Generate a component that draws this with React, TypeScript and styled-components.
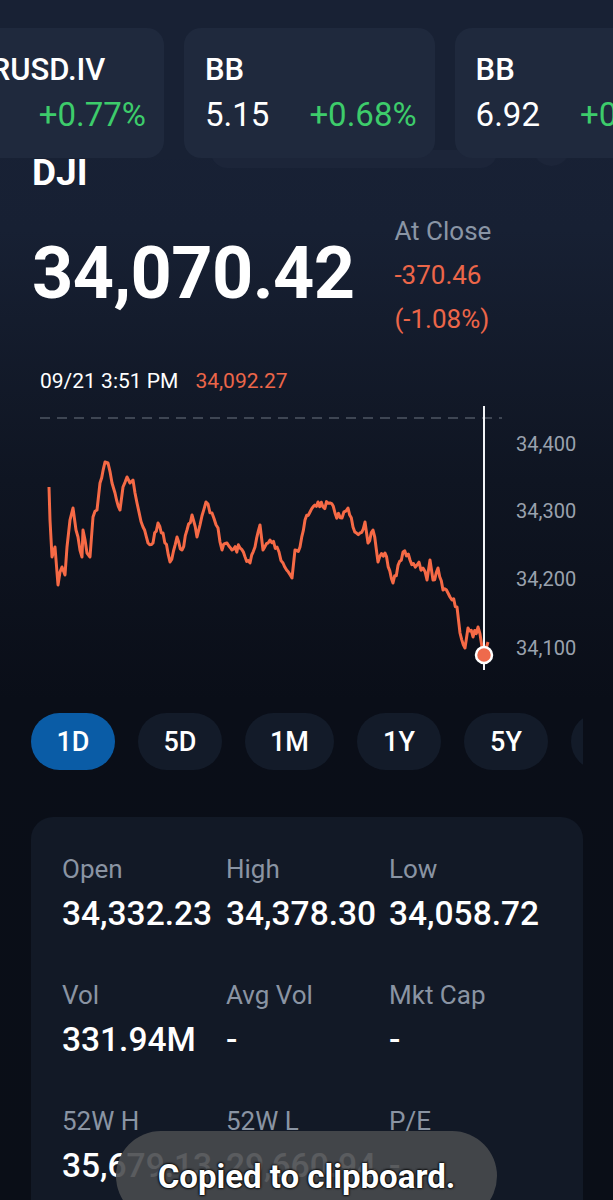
import React from 'react'
import styled, { createGlobalStyle } from 'styled-components'

const GlobalStyle = createGlobalStyle`
  html, body {
    margin: 0;
    padding: 0;
    background: #0a0e17;
  }
  body {
    font-family: Roboto, 'Noto Sans', 'Liberation Sans', sans-serif;
    -webkit-font-smoothing: antialiased;
  }
`

const Page = styled.div`
  position: relative;
  width: 613px;
  height: 1200px;
  overflow: hidden;
  background: linear-gradient(
    180deg,
    #192237 0px,
    #172033 230px,
    #0f1522 480px,
    #0a0e18 700px,
    #0a0e17 1200px
  );
  color: #fff;
`

/* sticky ticker strip, drawn over the scrolled title */
const TickerStrip = styled.div`
  position: absolute;
  top: 0;
  left: 0;
  right: 0;
  height: 159px;
  background: #182134;
  z-index: 2;
`
const HiddenSearch = styled.div`
  position: absolute;
  top: 150px;
  left: 211px;
  width: 286px;
  height: 18px;
  border-radius: 0 0 16px 16px;
  background: #1c2539;
`
const HiddenButton = styled.div`
  position: absolute;
  top: 146px;
  left: 533px;
  width: 37px;
  height: 20px;
  border-radius: 0 0 20px 20px;
  background: #1c2539;
`
const TickerTrack = styled.div`
  position: relative;
  display: flex;
  gap: 20px;
  padding-top: 28px;
  margin-left: -68px;
`
const TickerCard = styled.div`
  flex: none;
  display: flex;
  flex-direction: column;
  height: 130px;
  box-sizing: border-box;
  padding: 24px 18px 0 21px;
  border-radius: 17px;
  background: #1f293d;
`
const TickerName = styled.div`
  font-size: 31px;
  line-height: 36px;
  font-weight: 500;
  white-space: nowrap;
`
const TickerRow = styled.div`
  display: flex;
  gap: 40px;
  margin-top: 7px;
  font-size: 33px;
  line-height: 40px;
  white-space: nowrap;
`
const Up = styled.span`
  color: #3dcc6b;
`

const Content = styled.div`
  padding: 153px 0 0;
`
const Symbol = styled.div`
  margin-left: 32px;
  font-size: 37px;
  line-height: 40px;
  font-weight: 700;
`
const PriceRow = styled.div`
  display: flex;
  align-items: flex-start;
  gap: 40px;
  margin: 16px 0 0 32px;
`
const BigPrice = styled.div`
  margin-top: 25px;
  font-size: 72px;
  line-height: 80px;
  font-weight: 700;
  letter-spacing: -0.6px;
`
const ChangeCol = styled.div`
  display: flex;
  flex-direction: column;
  font-size: 26px;
  line-height: 44px;
`
const Muted = styled.span`
  color: #8a95a5;
`
const Down = styled.span`
  color: #ec6649;
`

const CrossHair = styled.div`
  display: flex;
  gap: 17px;
  margin: 26px 0 0 40px;
  font-size: 21px;
  line-height: 28px;
`

const ChartBox = styled.div`
  margin-top: 5px;
  height: 300px;
`
const AxisLabel = styled.text`
  font-family: Roboto, 'Liberation Sans', sans-serif;
  font-size: 20px;
  fill: #9aa2ae;
`

const Tabs = styled.div`
  display: flex;
  gap: 23px;
  margin: 13px 30px 0 31px;
  overflow: hidden;
`
const Tab = styled.div<{ $active?: boolean }>`
  flex: none;
  display: flex;
  align-items: center;
  justify-content: center;
  min-width: 84px;
  height: 57px;
  box-sizing: border-box;
  padding: 0 25px;
  border-radius: 29px;
  background: ${(p) => (p.$active ? '#0a5ca6' : '#131b29')};
  font-size: 27px;
  font-weight: 500;
`

const StatsCard = styled.div`
  margin: 47px 30px 0 31px;
  padding: 35px 0 60px 31px;
  border-radius: 22px;
  background: #121926;
  display: grid;
  grid-template-columns: 164px 163px 1fr;
  row-gap: 44px;
`
const Stat = styled.div`
  display: flex;
  flex-direction: column;
  gap: 8px;
`
const StatLabel = styled.div`
  font-size: 26px;
  line-height: 34px;
  color: #8a94a3;
`
const StatValue = styled.div`
  font-size: 33.5px;
  line-height: 40px;
  font-weight: 500;
  white-space: nowrap;
`

const Toast = styled.div`
  position: absolute;
  left: 116px;
  top: 1131px;
  width: 381px;
  height: 90px;
  border-radius: 45px;
  background: rgba(72, 74, 78, 0.9);
  display: flex;
  align-items: center;
  justify-content: center;
  z-index: 3;
  font-size: 33px;
  font-weight: 700;
  color: #fff;
  text-shadow: 0 0 2px #000, 0 0 2px #000, 0 0 3px #000;
`

const tickers = [
  { name: 'EURUSD.IV', price: '0.9', change: '+0.77%' },
  { name: 'BB', price: '5.15', change: '+0.68%' },
  { name: 'BB', price: '6.92', change: '+0.68%' },
]

const ranges = ['1D', '5D', '1M', '1Y', '5Y', 'MAX']

const stats = [
  ['Open', '34,332.23'],
  ['High', '34,378.30'],
  ['Low', '34,058.72'],
  ['Vol', '331.94M'],
  ['Avg Vol', '-'],
  ['Mkt Cap', '-'],
  ['52W H', '35,679.13'],
  ['52W L', '29,660.94'],
  ['P/E', '-'],
]

// anchor points traced from the intraday line, in page coordinates
const anchors: [number, number][] = [
  [49, 487], [50, 520], [52, 557], [55, 547], [58, 585], [62, 567], [65, 575],
  [67, 547], [70, 520], [73, 508], [76, 530], [78, 537], [82, 557], [83, 530],
  [87, 553], [90, 557], [93, 517], [97, 510], [100, 483], [105, 462], [108, 463],
  [112, 483], [115, 493], [120, 510], [123, 487], [127, 477], [130, 483],
  [133, 480], [137, 503], [143, 527], [148, 543], [153, 543], [158, 523],
  [163, 533], [170, 562], [177, 537], [182, 550], [187, 530], [192, 515],
  [197, 537], [200, 525], [206, 502], [212, 513], [218, 528], [222, 550],
  [227, 543], [232, 550], [240, 548], [250, 563], [255, 547], [260, 525],
  [263, 550], [270, 540], [277, 547], [283, 563], [292, 578], [295, 550],
  [300, 547], [305, 520], [310, 512], [318, 502], [323, 507], [330, 503],
  [335, 513], [342, 518], [348, 508], [353, 527], [360, 533], [365, 522],
  [368, 543], [373, 530], [378, 562], [385, 553], [393, 583], [403, 552],
  [410, 560], [417, 565], [423, 568], [427, 580], [430, 560], [433, 580],
  [438, 568], [443, 590], [448, 593], [452, 600], [457, 607], [460, 633],
  [465, 648], [468, 628], [473, 637], [478, 627], [482, 647], [484, 653],
  [488, 642],
]

const CHART_TOP = 400

function buildPath() {
  let seed = 7
  const rand = () => {
    seed = (seed * 16807) % 2147483647
    return seed / 2147483647
  }
  const pts: string[] = []
  anchors.forEach(([x, y], i) => {
    pts.push(`${x},${y - CHART_TOP}`)
    const next = anchors[i + 1]
    if (!next) return
    const steps = Math.floor((next[0] - x) / 1.6)
    for (let s = 1; s < steps; s++) {
      const t = s / steps
      const nx = x + (next[0] - x) * t
      const ny = y + (next[1] - y) * t + (rand() - 0.5) * 8
      pts.push(`${nx.toFixed(1)},${(ny - CHART_TOP).toFixed(1)}`)
    }
  })
  return 'M' + pts.join(' L')
}

function PriceChart() {
  const d = buildPath()
  return (
    <ChartBox>
      <svg width="613" height="300" viewBox="0 0 613 300">
        <line x1="40" y1="18" x2="502" y2="18" stroke="#4d5563" strokeWidth="1.6" strokeDasharray="10 7" />
        <path d={d} fill="none" stroke="#f66a46" strokeWidth="3" strokeLinejoin="round" />
        <line x1="484" y1="6" x2="484" y2="270" stroke="#f2f4f7" strokeWidth="2" />
        <circle cx="484" cy="255" r="8" fill="#ee6a4c" stroke="#fff" strokeWidth="2.5" />
        <AxisLabel x="516" y="51">34,400</AxisLabel>
        <AxisLabel x="516" y="118">34,300</AxisLabel>
        <AxisLabel x="516" y="186">34,200</AxisLabel>
        <AxisLabel x="516" y="255">34,100</AxisLabel>
      </svg>
    </ChartBox>
  )
}

export default function App() {
  return (
    <Page>
      <GlobalStyle />
      <TickerStrip>
        <HiddenSearch />
        <HiddenButton />
        <TickerTrack>
          {tickers.map((t, i) => (
            <TickerCard key={i}>
              <TickerName>{t.name}</TickerName>
              <TickerRow>
                <span>{t.price}</span>
                <Up>{t.change}</Up>
              </TickerRow>
            </TickerCard>
          ))}
        </TickerTrack>
      </TickerStrip>

      <Content>
        <Symbol>DJI</Symbol>
        <PriceRow>
          <BigPrice>34,070.42</BigPrice>
          <ChangeCol>
            <Muted>At Close</Muted>
            <Down>-370.46</Down>
            <Down>(-1.08%)</Down>
          </ChangeCol>
        </PriceRow>

        <CrossHair>
          <span>09/21 3:51 PM</span>
          <Down>34,092.27</Down>
        </CrossHair>
        <PriceChart />

        <Tabs>
          {ranges.map((r, i) => (
            <Tab key={r} $active={i === 0}>
              {r}
            </Tab>
          ))}
        </Tabs>

        <StatsCard>
          {stats.map(([label, value]) => (
            <Stat key={label}>
              <StatLabel>{label}</StatLabel>
              <StatValue>{value}</StatValue>
            </Stat>
          ))}
        </StatsCard>
      </Content>

      <Toast>Copied to clipboard.</Toast>
    </Page>
  )
}
